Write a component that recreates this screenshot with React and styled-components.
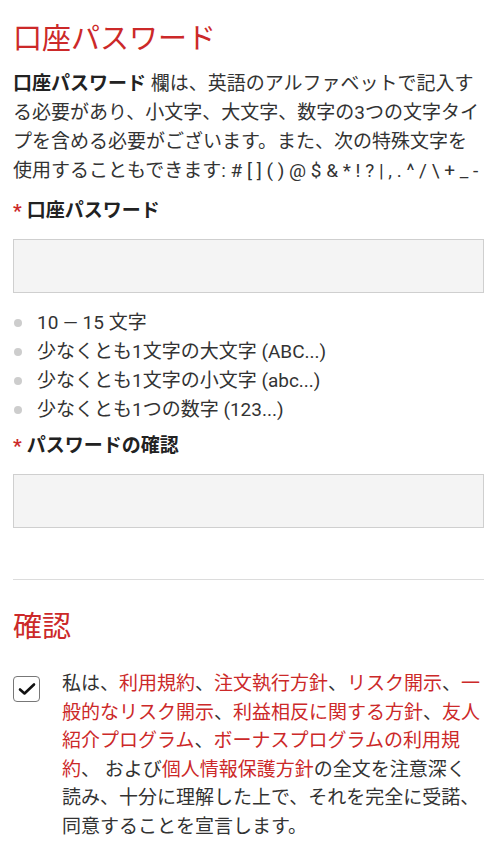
import styled, { createGlobalStyle } from "styled-components";

const GlobalStyle = createGlobalStyle`
  html, body {
    margin: 0;
    padding: 0;
    background: #fff;
  }
  body {
    font-family: Roboto, "Noto Sans CJK JP", sans-serif;
    color: #333;
  }
`;

const Page = styled.div`
  width: 500px;
  box-sizing: border-box;
  padding: 19px 16px 20px 13px;
`;

const SectionTitle = styled.h1`
  margin: ${(p) => p.$top || 0}px 0 0;
  font-size: 29px;
  line-height: 40px;
  font-weight: 400;
  color: #cc2929;
`;

const Intro = styled.p`
  margin: 10px 0 0;
  font-size: 19px;
  line-height: 29px;
  color: #333;

  strong {
    font-weight: 700;
    color: #222;
  }
`;

const FieldLabel = styled.div`
  margin-top: ${(p) => p.$top}px;
  font-size: 19px;
  line-height: 29px;
  font-weight: 700;
  color: #222;
`;

const Required = styled.span`
  color: #cc2929;
  margin-right: 5px;
`;

const TextInput = styled.input`
  display: block;
  width: 100%;
  box-sizing: border-box;
  height: 54px;
  margin-top: 14px;
  padding: 0 12px;
  border: 1.5px solid #cfcfcf;
  background: #f4f4f4;
  font-family: inherit;
  font-size: 19px;
  outline: none;
`;

const RuleList = styled.ul`
  list-style: none;
  margin: 15px 0 0;
  padding: 0;
`;

const RuleItem = styled.li`
  display: flex;
  align-items: center;
  font-size: 19px;
  line-height: 29px;
  color: #333;

  &::before {
    content: "";
    width: 8px;
    height: 8px;
    border-radius: 50%;
    background: #cdcdcd;
    margin: 0 15px 0 1px;
    flex-shrink: 0;
  }
`;

const Divider = styled.hr`
  margin: 51px 0 0;
  border: 0;
  border-top: 1.5px solid #dcdcdc;
`;

const AgreeRow = styled.label`
  display: flex;
  align-items: flex-start;
  gap: 22px;
  margin-top: 23px;
`;

const CheckBox = styled.span`
  flex-shrink: 0;
  width: 27px;
  height: 26px;
  box-sizing: border-box;
  margin-top: 6px;
  border: 1.5px solid #777;
  border-radius: 4px;
  display: flex;
  align-items: center;
  justify-content: center;
  background: #fff;
`;

const AgreeText = styled.p`
  margin: 0;
  padding-right: 3px;
  flex: 1;
  font-size: 19px;
  line-height: 28.6px;
  color: #333;
`;

const Link = styled.span`
  color: #cc2929;
`;

const rules = [
  "10 — 15 文字",
  "少なくとも1文字の大文字 (ABC...)",
  "少なくとも1文字の小文字 (abc...)",
  "少なくとも1つの数字 (123...)",
];

function App() {
  return (
    <>
      <GlobalStyle />
      <Page>
        <SectionTitle>口座パスワード</SectionTitle>
        <Intro>
          <strong>口座パスワード</strong> 欄は、英語のアルファベットで記入する必要があり、小文字、大文字、数字の3つの文字タイプを含める必要がございます。また、次の特殊文字を使用することもできます: # [ ] ( ) @ $ & * ! ? | , . ^ / \ + _ -
        </Intro>

        <FieldLabel $top={11}>
          <Required>*</Required>口座パスワード
        </FieldLabel>
        <TextInput type="password" />

        <RuleList>
          {rules.map((rule) => (
            <RuleItem key={rule}>{rule}</RuleItem>
          ))}
        </RuleList>

        <FieldLabel $top={7}>
          <Required>*</Required>パスワードの確認
        </FieldLabel>
        <TextInput type="password" />

        <Divider />

        <SectionTitle $top={27}>確認</SectionTitle>

        <AgreeRow>
          <CheckBox>
            <svg width="18" height="14" viewBox="0 0 18 14" fill="none">
              <path
                d="M2 7.5 L6.5 11.5 L16 2.5"
                stroke="#111"
                strokeWidth="2.6"
                strokeLinecap="round"
                strokeLinejoin="round"
              />
            </svg>
          </CheckBox>
          <AgreeText>
            私は、<Link>利用規約</Link>、<Link>注文執行方針</Link>、<Link>リスク開示</Link>、<Link>一般的なリスク開示</Link>、<Link>利益相反に関する方針</Link>、<Link>友人紹介プログラム</Link>、<Link>ボーナスプログラムの利用規約</Link>、 および<Link>個人情報保護方針</Link>の全文を注意深く読み、十分に理解した上で、それを完全に受諾、同意することを宣言します。
          </AgreeText>
        </AgreeRow>
      </Page>
    </>
  );
}

export default App;
